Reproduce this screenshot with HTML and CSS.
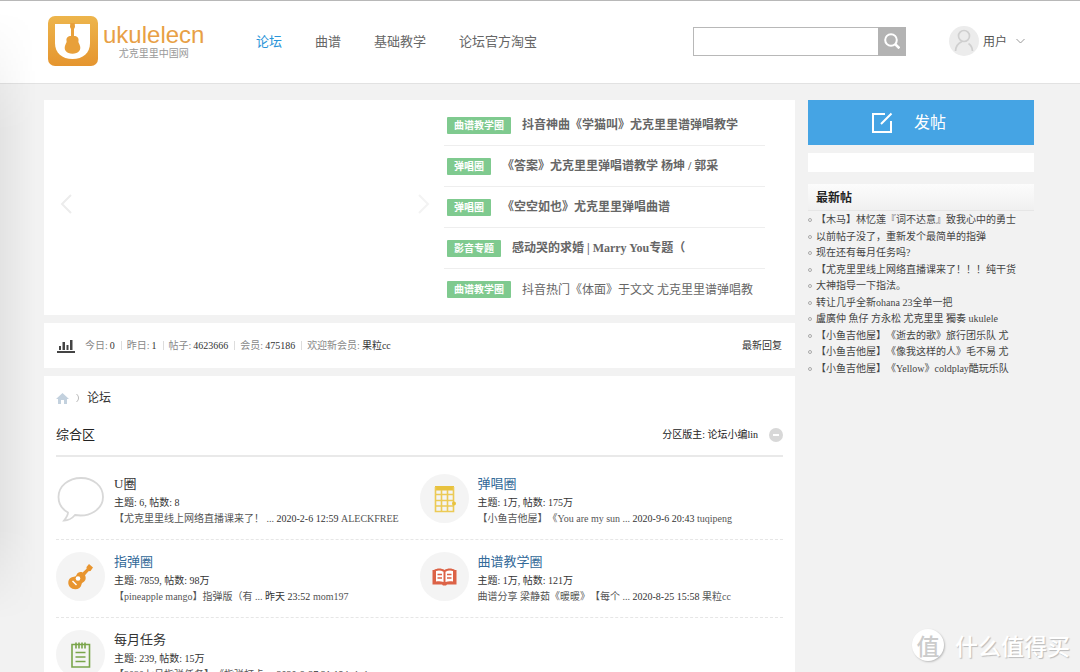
FILE: index.html
```
<!DOCTYPE html>
<html lang="zh-CN">
<head>
<meta charset="utf-8">
<title>尤克里里中国网 - 论坛</title>
<link rel="stylesheet" href="styles.css">
</head>
<body>
<header class="header">
  <a class="logo" href="#">
    <svg class="logo-mark" viewBox="0 0 50 50" aria-hidden="true">
      <defs><linearGradient id="gold" x1="0" y1="0" x2="0" y2="1"><stop offset="0" stop-color="#edb54c"/><stop offset="1" stop-color="#e5952f"/></linearGradient></defs>
      <rect width="50" height="50" rx="7" fill="url(#gold)"/>
      <path d="M7 8h35v19c0 10-7 16-17.500 16S7 37 7 27z" fill="#fff"/>
      <path d="M22.300 7h4.400l.3 4-1 2v7c3 0 5 2 4.500 4.500-.3 1.500 0 2 .8 3.500 3 6-1 9.700-6.800 9.700s-9.800-3.700-6.800-9.700c.8-1.500 1.100-2 .8-3.500C18 22 20 20 23 20v-7l-1-2z" fill="#e8a03a"/>
    </svg>
    <span class="logo-text"><span class="logo-name">ukulelecn</span><span class="logo-sub">尤克里里中国网</span></span>
  </a>
  <nav class="nav">
    <a class="active" href="#">论坛</a><a href="#">曲谱</a><a href="#">基础教学</a><a href="#">论坛官方淘宝</a>
  </nav>
  <form class="search">
    <input type="text" aria-label="搜索">
    <button type="button" aria-label="搜索"><svg width="16" height="16" viewBox="0 0 16 16" fill="none" stroke="#fff"><circle cx="7" cy="7" r="5.800" stroke-width="2"/><path d="M11 11l4.500 4.300" stroke-width="2.600"/></svg></button>
  </form>
  <button class="user" type="button">
    <svg width="30" height="30" viewBox="0 0 30 30" fill="none" stroke="#cfcfcf" stroke-width="1.700"><circle cx="15" cy="15" r="15" fill="#ececec" stroke="none"/><circle cx="15" cy="10" r="5.500"/><path d="M6.500 25c.3-5.500 3-8 6.500-9.500M23.500 25c-.3-4-1.500-6-4-7.500"/></svg>
    <span>用户</span>
    <svg class="caret" width="9" height="6" viewBox="0 0 9 6" fill="none" stroke="#999"><path d="M.5 1l4 4 4-4"/></svg>
  </button>
</header>

<div class="page">
  <main class="main">
    <section class="card feature">
      <div class="slider">
        <button type="button" aria-label="上一张"><svg width="12" height="20" viewBox="0 0 12 20" fill="none" stroke="#ececec" stroke-width="2"><path d="M11 1l-9 9 9 9"/></svg></button>
        <button type="button" aria-label="下一张"><svg width="12" height="20" viewBox="0 0 12 20" fill="none" stroke="#f3f3f3" stroke-width="2"><path d="M1 1l9 9-9 9"/></svg></button>
      </div>
      <ul class="topics">
        <li><a class="tag" href="#">曲谱教学圈</a><a class="strong" href="#">抖音神曲《学猫叫》尤克里里谱弹唱教学</a></li>
        <li><a class="tag" href="#">弹唱圈</a><a class="strong" href="#">《答案》尤克里里弹唱谱教学 杨坤 / 郭采</a></li>
        <li><a class="tag" href="#">弹唱圈</a><a class="strong" href="#">《空空如也》尤克里里弹唱曲谱</a></li>
        <li><a class="tag" href="#">影音专题</a><a class="strong" href="#">感动哭的求婚 | Marry You专题（</a></li>
        <li><a class="tag" href="#">曲谱教学圈</a><a href="#">抖音热门《体面》于文文 尤克里里谱弹唱教</a></li>
      </ul>
    </section>

    <section class="card stats">
      <svg width="18" height="14" viewBox="0 0 18 14" fill="#444"><path d="M0 12h18v2H0zM2 7h2v4H2zM5.500 3H8v8H5.500zM9.500 6h2v5h-2zM13 1h2.500v10H13z"/></svg>
      <ul>
        <li>今日: <em>0</em></li><li>昨日: <em>1</em></li><li>帖子: <em>4623666</em></li><li>会员: <em>475186</em></li><li>欢迎新会员: <em>果粒cc</em></li>
      </ul>
      <a href="#">最新回复</a>
    </section>

    <section class="card forum">
      <div class="crumbs">
        <svg width="13" height="11" viewBox="0 0 13 11" fill="#c3d1de"><path d="M6.500 0L13 6h-2v5H8V7H5v4H2V6H0z"/></svg>
        <svg width="4" height="8" viewBox="0 0 4 8" fill="none" stroke="#bbb"><path d="M.5 0c1.500 1.500 2 2.500 2 4s-.5 2.500-2 4"/></svg>
        <a href="#">论坛</a>
      </div>
      <div class="zone">
        <h2>综合区</h2>
        <span>分区版主: <a href="#">论坛小编lin</a></span>
        <button type="button" aria-label="收起"><svg width="14" height="14" viewBox="0 0 14 14"><circle cx="7" cy="7" r="7" fill="#d8d8d8"/><path d="M4 7h6" stroke="#fff" stroke-width="2"/></svg></button>
      </div>
      <div class="row">
        <article class="board">
          <svg class="icon" viewBox="0 0 49 49"><path d="M25 4C12.500 4 2.500 12 2.500 23c0 7 4 12.500 9.500 15.500 0 3-1.500 5-4 8 4.500 0 8.500-2.500 11-5.500 15 2.500 28-6 28-18C47 12 37.500 4 25 4z" fill="#fff" stroke="#d8d8d8" stroke-width="1.800"/></svg>
          <div class="info"><h3><a class="dark" href="#">U圈</a></h3><p>主题: 6, 帖数: 8</p><p><a href="#">【尤克里里线上网络直播课来了！ ...</a> 2020-2-6 12:59 <a href="#">ALECKFREE</a></p></div>
        </article>
        <article class="board">
          <svg class="icon" viewBox="0 0 49 49"><circle cx="24.500" cy="24.500" r="24.500" fill="#f4f4f4"/><path d="M15 12h19v4.500H15z" fill="#e8c23e"/><path d="M15.500 13v24.500h18V13M15 20.500h19M15 26.500h19M15 32h19M21.500 16v22M27.500 16v22" fill="none" stroke="#ecca55" stroke-width="1.600"/><circle cx="34" cy="29.500" r="2" fill="#e8c23e"/></svg>
          <div class="info"><h3><a href="#">弹唱圈</a></h3><p>主题: 1万, 帖数: 175万</p><p><a href="#">【小鱼吉他屋】《You are my sun ...</a> 2020-9-6 20:43 <a href="#">tuqipeng</a></p></div>
        </article>
      </div>
      <div class="row">
        <article class="board">
          <svg class="icon" viewBox="0 0 49 49"><circle cx="24.500" cy="24.500" r="24.500" fill="#f4f4f4"/><path d="M30.500 15l2.500-3 4 3.500-2.500 3.500-2 .3-3.500 4c1.500 3 .5 5.800-1.800 7-1.200.6-1.500 1-1.700 2.200-.5 3-3 4.700-6.200 4.700-4 0-7.300-3.200-7-7 .3-3.500 2.700-5.200 5.700-5.500 1.500-.1 2-.5 2.600-1.900 1-2.600 3.700-3.400 6-2.300l4-3.700z" fill="#e8952f"/><circle cx="22" cy="26.500" r="2.300" fill="#fff"/><path d="M16.500 29l4 4" stroke="#fff" stroke-width="1.500"/></svg>
          <div class="info"><h3><a href="#">指弹圈</a></h3><p>主题: 7859, 帖数: 98万</p><p><a href="#">【pineapple mango】指弹版（有 ...</a> 昨天 23:52 <a href="#">mom197</a></p></div>
        </article>
        <article class="board">
          <svg class="icon" viewBox="0 0 49 49"><circle cx="24.500" cy="24.500" r="24.500" fill="#f4f4f4"/><path d="M12.500 18h1.500c3-2 7.500-2 10.500 0 3-2 7.500-2 10.500 0h1.500v14.500h-9.500l-1 1h-3l-1-1h-9.500z" fill="#dc6246"/><path d="M16 19c2.500-1 5-.7 7.500.7V30c-2.500-1-5-1-7.500-.5zM33 19c-2.500-1-5-.7-7.500.7V30c2.500-1 5-1 7.500-.5z" fill="#fff"/><path d="M17.500 22.500H22M17.500 26H22M27 22.500h4.500M27 26h4.500" stroke="#dc6246" stroke-width="1.300"/></svg>
          <div class="info"><h3><a href="#">曲谱教学圈</a></h3><p>主题: 1万, 帖数: 121万</p><p><a href="#">曲谱分享 梁静茹《暖暖》【每个 ...</a> 2020-8-25 15:58 <a href="#">果粒cc</a></p></div>
        </article>
      </div>
      <div class="row">
        <article class="board">
          <svg class="icon" viewBox="0 0 49 49"><circle cx="24.500" cy="24.500" r="24.500" fill="#f4f4f4"/><path d="M16 14.500h17.500V37H16zM20 18.500v-6M23 18.500v-6M26 18.500v-6M29 18.500v-6M19.500 22.500h10M19.500 27h10M19.500 31.500h10" fill="none" stroke="#79a54a" stroke-width="1.600"/></svg>
          <div class="info"><h3><a class="dark" href="#">每月任务</a></h3><p>主题: 239, 帖数: 15万</p><p><a href="#">【2020七月指弹任务】《指弹打卡 ...</a> 2020-8-27 21:19 <a href="#">babala</a></p></div>
        </article>
      </div>
    </section>
  </main>

  <aside class="side">
    <button class="post" type="button"><svg width="21" height="21" viewBox="0 0 21 21" fill="none" stroke="#fff" stroke-width="2"><path d="M13 2H1v18h18V9M9 12L19.500 1.500"/></svg><span>发帖</span></button>
    <div class="blank"></div>
    <h2>最新帖</h2>
    <ul class="latest">
      <li><a href="#">【木马】林忆莲『词不达意』致我心中的勇士</a></li>
      <li><a href="#">以前帖子没了，重新发个最简单的指弹</a></li>
      <li><a href="#">现在还有每月任务吗?</a></li>
      <li><a href="#">【尤克里里线上网络直播课来了！！！纯干货</a></li>
      <li><a href="#">大神指导一下指法。</a></li>
      <li><a href="#">转让几乎全新ohana 23全单一把</a></li>
      <li><a href="#">盧廣仲 魚仔 方永松 尤克里里 獨奏 ukulele</a></li>
      <li><a href="#">【小鱼吉他屋】《逝去的歌》旅行团乐队 尤</a></li>
      <li><a href="#">【小鱼吉他屋】《像我这样的人》毛不易 尤</a></li>
      <li><a href="#">【小鱼吉他屋】《Yellow》coldplay酷玩乐队</a></li>
    </ul>
  </aside>
</div>
<div class="edge"></div>
<div class="mark"><span class="seal">值</span><span>什么值得买</span></div>
</body>
</html>
```
FILE: styles.css
```
*, *::before { box-sizing: border-box; margin: 0; padding: 0; }
html { overflow: hidden; }
body {
  position: relative;
  height: 100vh;
  overflow: hidden;
  background: #f2f2f2;
  color: #333;
  font: 10px/16px "Liberation Serif", "Noto Sans CJK SC", serif;
  text-spacing-trim: space-all;
}
a { color: inherit; text-decoration: none; }
ul { list-style: none; }
button { border: 0; background: none; font: inherit; color: inherit; }
svg { display: block; flex: none; }

.header {
  display: flex;
  align-items: center;
  height: 84px;
  padding: 0 55px 2px 48px;
  background: #fff;
  border-top: 1px solid #b8b8b8;
  border-bottom: 1px solid #e2e2e2;
  font-family: "Noto Sans CJK SC", sans-serif;
}
.logo { display: flex; align-items: center; gap: 5px; width: 208px; }
.logo-mark { width: 50px; height: 50px; }
.logo-text { display: flex; flex-direction: column; align-items: center; }
.logo-name { font: 24px/24px "Liberation Sans", sans-serif; color: #e8a045; }
.logo-sub { font-size: 10px; line-height: 12px; color: #999; }
.nav { display: flex; gap: 33px; font-size: 13px; line-height: 20px; color: #666; }
.nav .active { color: #2b95d9; }
.search { display: flex; margin-left: auto; width: 213px; height: 29px; }
.search input { flex: 1; min-width: 0; border: 1px solid #b8b8b8; border-right: 0; background: #fff; padding: 0 8px; }
.search button { display: flex; align-items: center; justify-content: center; width: 28px; background: #b3b3b3; }
.user { display: flex; align-items: center; gap: 4px; margin-left: 43px; font-size: 12px; color: #555; }
.user .caret { margin-left: 5px; }

.page { display: flex; align-items: flex-start; gap: 13px; padding: 16px 46px 0 44px; }
.main { flex: 1; min-width: 0; display: flex; flex-direction: column; gap: 8px; }
.card { background: #fff; }

.feature { display: flex; padding: 5px 30px 5px 16px; }
.slider { flex: 1; display: flex; align-items: center; justify-content: space-between; padding: 0 14px 8px 0; }
.topics { width: 321px; font-size: 12px; color: #666; }
.topics li { display: flex; align-items: center; gap: 11px; height: 41px; padding-left: 3px; border-bottom: 1px solid #eee; white-space: nowrap; }
.topics li:last-child { border-bottom: 0; }
.topics .tag { padding: 0 7px; font-size: 10px; line-height: 17px; font-weight: bold; color: #fff; background: #7fca8f; border-radius: 1px; }
.topics .strong { font-weight: bold; }

.stats { display: flex; align-items: center; gap: 10px; height: 45px; padding: 0 13px; color: #888; }
.stats ul { display: flex; flex: 1; }
.stats li { display: flex; align-items: center; gap: 2px; }
.stats li + li::before { content: ""; width: 1px; height: 9px; margin: 0 3px 0 6px; background: #ddd; }
.stats em { font-style: normal; color: #333; }
.stats a { color: #333; }

.forum { padding: 14px 12px; }
.crumbs { display: flex; align-items: center; gap: 7px; font-size: 12px; line-height: 16px; }
.zone { display: flex; align-items: center; height: 51px; margin-bottom: 5px; padding-top: 8px; border-bottom: 2px solid #e9e9e9; color: #222; }
.zone h2 { flex: 1; font-size: 13px; font-weight: normal; line-height: 20px; }
.zone button { margin-left: 11px; }
.row { display: grid; grid-template-columns: 1fr 1fr; border-bottom: 1px dashed #e6e6e6; }
.board { display: flex; gap: 9px; padding: 12px 0; }
.icon { width: 49px; height: 49px; }
.info { white-space: nowrap; }
.info h3 { margin-bottom: 1px; font-size: 13px; font-weight: normal; line-height: 20px; color: #336a99; }
.info .dark { color: #333; }
.info p a { color: #555; }

.side { width: 226px; }
.post { display: flex; align-items: center; justify-content: center; gap: 21px; width: 100%; height: 45px; padding-right: 24px; background: #45a4e4; color: #fff; font-size: 16px; }
.blank { height: 19px; margin: 8px 0 12px; background: #fff; }
.side h2 { height: 27px; padding-left: 8px; font-size: 12px; line-height: 28px; color: #222; background: linear-gradient(#fcfcfc, #f0f0f0); border-bottom: 1px solid #e6e6e6; }
.latest { display: grid; grid-auto-rows: 1fr; min-height: 166px; padding-top: 1px; color: #444; }
.latest li { display: flex; align-items: center; gap: 4px; line-height: 16px; white-space: nowrap; }
.latest li::before { content: ""; width: 4px; height: 4px; border: 1px solid #aaa; border-radius: 50%; }

.edge { position: absolute; left: 0; top: 10px; width: 36px; height: 610px; background: linear-gradient(to right, rgba(0,0,0,.06), rgba(0,0,0,0)); -webkit-mask-image: linear-gradient(transparent, #000 20%, #000 85%, transparent); mask-image: linear-gradient(transparent, #000 20%, #000 85%, transparent); pointer-events: none; }
.mark { position: absolute; right: 10px; bottom: 11px; display: flex; align-items: center; gap: 11px; font: 500 23px/32px "Noto Sans CJK SC", sans-serif; color: #fff; text-shadow: 1px 1px 1px #bbb; }
.seal { width: 32px; height: 32px; border-radius: 50%; background: #fff; box-shadow: 1px 1px 2px #bbb; text-align: center; color: #ccc; text-shadow: none; }
```
